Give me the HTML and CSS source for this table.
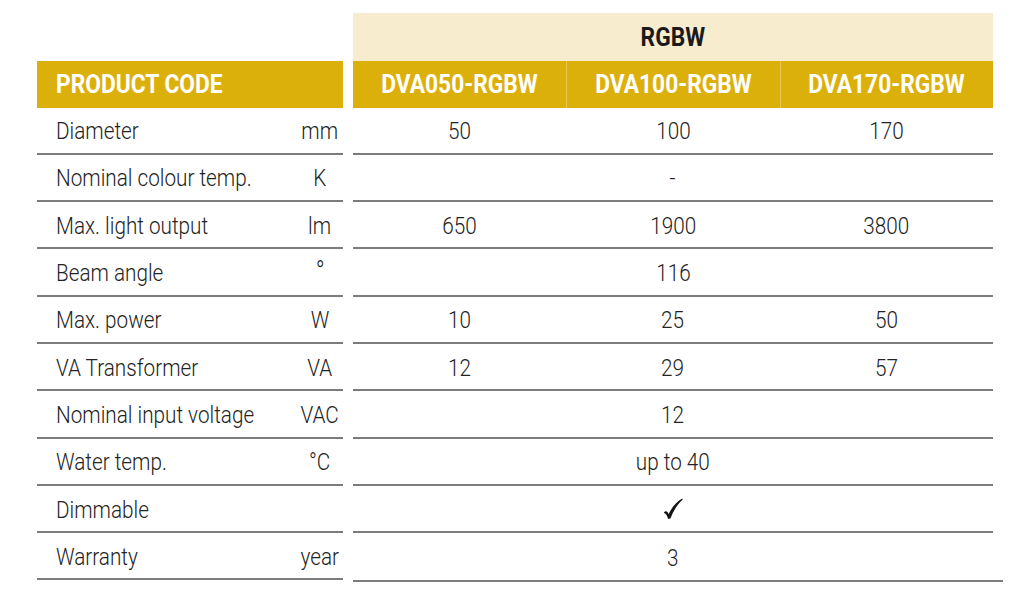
FILE: index.html
```html
<!DOCTYPE html>
<html lang="en">
<head>
<meta charset="utf-8">
<title>DVA RGBW specifications</title>
<link rel="stylesheet" href="styles.css">
</head>
<body>
<div class="sheet">
  <div class="labels">
    <div class="spacer"></div>
    <div class="head-left"><span class="t">PRODUCT CODE</span></div>
    <div class="lrow"><span class="name"><span class="t">Diameter</span></span><span class="unit"><span class="t">mm</span></span></div>
    <div class="lrow"><span class="name"><span class="t">Nominal colour temp.</span></span><span class="unit"><span class="t">K</span></span></div>
    <div class="lrow"><span class="name"><span class="t">Max. light output</span></span><span class="unit"><span class="t">lm</span></span></div>
    <div class="lrow"><span class="name"><span class="t">Beam angle</span></span><span class="unit"><span class="t deg">°</span></span></div>
    <div class="lrow"><span class="name"><span class="t">Max. power</span></span><span class="unit"><span class="t">W</span></span></div>
    <div class="lrow"><span class="name"><span class="t">VA Transformer</span></span><span class="unit"><span class="t">VA</span></span></div>
    <div class="lrow"><span class="name"><span class="t">Nominal input voltage</span></span><span class="unit"><span class="t">VAC</span></span></div>
    <div class="lrow"><span class="name"><span class="t">Water temp.</span></span><span class="unit"><span class="t">°C</span></span></div>
    <div class="lrow"><span class="name"><span class="t">Dimmable</span></span><span class="unit"></span></div>
    <div class="lrow"><span class="name"><span class="t">Warranty</span></span><span class="unit"><span class="t">year</span></span></div>
  </div>
  <div class="values">
    <div class="family"><span class="t">RGBW</span></div>
    <div class="codes">
      <div class="code"><span class="t">DVA050-RGBW</span></div>
      <div class="code"><span class="t">DVA100-RGBW</span></div>
      <div class="code"><span class="t">DVA170-RGBW</span></div>
    </div>
    <div class="vrow"><span><span class="t">50</span></span><span><span class="t">100</span></span><span><span class="t">170</span></span></div>
    <div class="vrow"><span class="all"><span class="t">-</span></span></div>
    <div class="vrow"><span><span class="t">650</span></span><span><span class="t">1900</span></span><span><span class="t">3800</span></span></div>
    <div class="vrow"><span class="all"><span class="t">116</span></span></div>
    <div class="vrow"><span><span class="t">10</span></span><span><span class="t">25</span></span><span><span class="t">50</span></span></div>
    <div class="vrow"><span><span class="t">12</span></span><span><span class="t">29</span></span><span><span class="t">57</span></span></div>
    <div class="vrow"><span class="all"><span class="t">12</span></span></div>
    <div class="vrow"><span class="all"><span class="t">up to 40</span></span></div>
    <div class="vrow"><span class="all check"><svg width="20" height="22" viewBox="0 0 20 22" aria-label="yes"><path d="M1 14.2 C2.6 12.6 4.6 13 5.6 16.2 C8.6 9.6 13.2 4 19.2 0.6 L19.8 1.4 C14.6 6 10.4 12.6 7.4 20.6 L5.2 21 C4.4 18.2 3 15.6 1 14.8 Z" fill="#141414"/></svg></span></div>
    <div class="vrow last"><span class="all"><span class="t">3</span></span></div>
    <div class="end-rule"></div>
  </div>
</div>
</body>
</html>
```
FILE: styles.css
```css
* { box-sizing: border-box; }
html, body { margin: 0; padding: 0; background: #fff; }
body {
  font-family: Roboto, "Liberation Sans", sans-serif;
  font-weight: 300;
  color: #232323;
}
.t {
  display: inline-block;
  white-space: nowrap;
  transform: scaleX(0.845);
  transform-origin: center;
}
.sheet {
  display: flex;
  gap: 10px;
  padding: 13px 0 0 37px;
}
.labels { width: 306px; }
.values { width: 640px; }
.spacer { height: 47.5px; }
.head-left, .family, .code { font-weight: 700; font-size: 26px; }
.head-left .t, .family .t, .code .t { transform: scaleX(0.875); }
.head-left {
  height: 47px;
  background: #dcb00a;
  color: #fff;
  display: flex;
  align-items: center;
  padding-left: 19px;
}
.head-left .t { transform-origin: left center; }
.lrow, .vrow {
  height: 47.3px;
  border-bottom: 2px solid #7c7c7c;
  font-size: 24.5px;
  display: flex;
  align-items: center;
  padding-top: 1px;
}
.lrow .name { flex: 1; padding-left: 19px; }
.lrow .name .t { transform-origin: left center; }
.lrow .unit { width: 46px; text-align: center; margin-right: 0; }
.lrow .unit .deg { font-size: 28px; margin-top: -8px; }
.family {
  height: 47.5px;
  background: #f7ecce;
  color: #1a1a1a;
  display: flex;
  align-items: center;
  justify-content: center;
}
.codes {
  height: 47px;
  background: #dcb00a;
  display: grid;
  grid-template-columns: 1fr 1fr 1fr;
}
.code {
  color: #fff;
  display: flex;
  align-items: center;
  justify-content: center;
}
.code + .code { border-left: 1px solid #e9c653; }
.vrow {
  display: grid;
  grid-template-columns: 1fr 1fr 1fr;
  align-items: center;
}
.vrow > span { text-align: center; }
.vrow .all { grid-column: 1 / 4; }
.vrow .check { display: flex; justify-content: center; }
.vrow .check svg { display: block; }
.vrow.last { border-bottom: none; }
.end-rule { height: 2px; width: calc(100% + 10px); background: #7c7c7c; }
```
